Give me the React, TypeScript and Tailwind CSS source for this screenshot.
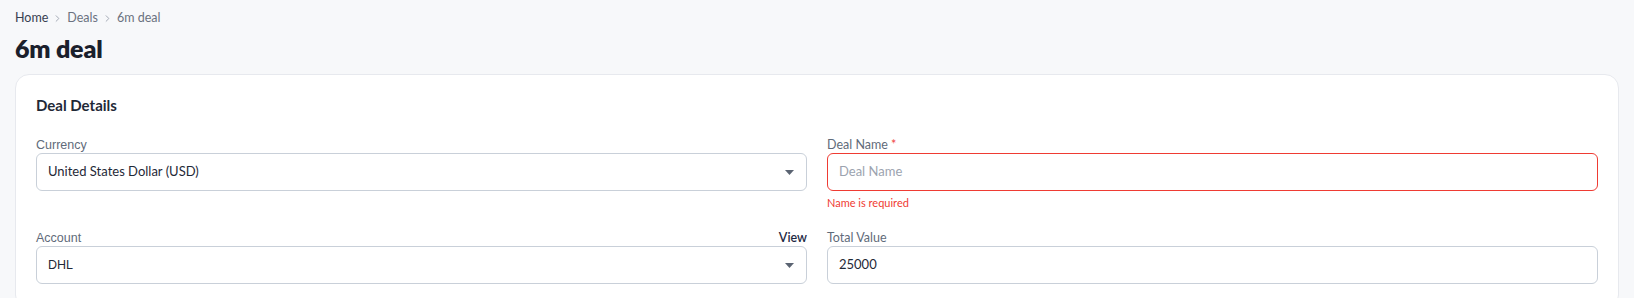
import React from 'react';
import { ChevronRight } from 'lucide-react';

const Caret = () => (
    <svg width="9" height="5" viewBox="0 0 9 5" className="shrink-0">
        <path d="M0 0 L9 0 L4.5 5 Z" fill="#5b6472" />
    </svg>
);

const Field = ({ label, children, aside, labelClass = '' }: { label: React.ReactNode; children: React.ReactNode; aside?: React.ReactNode; labelClass?: string }) => (
    <div className="flex flex-col">
        <div className="flex items-end justify-between h-4">
            <span className={`text-[12.5px] leading-4 text-[#5f6b7a] ${labelClass}`}>{label}</span>
            {aside}
        </div>
        {children}
    </div>
);

const App = () => {
    return (
        <div className="min-h-[298px] w-full bg-[#f7f8fa] px-[15px] pt-[10px] font-['Lato',sans-serif] text-[#1f2937]">
            {/* Breadcrumb */}
            <nav className="flex items-center gap-[4px] text-[12.5px] leading-4">
                <span className="text-[#374151]">Home</span>
                <ChevronRight size={11} strokeWidth={2} className="text-[#9ca3af]" />
                <span className="text-[#6b7280]">Deals</span>
                <ChevronRight size={11} strokeWidth={2} className="text-[#9ca3af]" />
                <span className="text-[#6b7280]">6m deal</span>
            </nav>

            <h1 className="mt-[6px] text-[25px] leading-[32px] font-extrabold text-[#1a202c] tracking-[-0.2px]">6m deal</h1>

            {/* Card */}
            <div className="mt-[10px] rounded-[14px] border border-[#e7e9ee] bg-white px-5 pt-[20px] pb-6">
                <h2 className="text-[15px] leading-5 font-bold text-[#1f2937]">Deal Details</h2>

                <div className="mt-[22px] grid grid-cols-2 gap-x-5 gap-y-5 items-start">
                    <Field label="Currency" labelClass="font-['Liberation_Sans',sans-serif]">
                        <div className="flex h-[38px] items-center justify-between rounded-[6px] border border-[#c9d0d9] pl-[11px] pr-[12px] text-[13px]">
                            <span className="text-[#1f2937]">United States Dollar (USD)</span>
                            <Caret />
                        </div>
                    </Field>

                    <Field label={<>Deal Name <span className="text-[#ef4444]">*</span></>}>
                        <div className="flex h-[38px] items-center rounded-[6px] border border-[#ef3b33] pl-[11px] text-[13px]">
                            <span className="text-[#9ca3af]">Deal Name</span>
                        </div>
                        <span className="mt-[5px] text-[11px] leading-[14px] text-[#ef3b33]">Name is required</span>
                    </Field>

                    <Field
                        label="Account"
                        labelClass="font-['Liberation_Sans',sans-serif]"
                        aside={<span className="text-[12.5px] leading-4 font-semibold text-[#1e2a44]">View</span>}
                    >
                        <div className="flex h-[38px] items-center justify-between rounded-[6px] border border-[#c9d0d9] pl-[11px] pr-[12px] text-[13px]">
                            <span className="font-['Liberation_Sans',sans-serif] text-[12.5px] text-[#1f2937]">DHL</span>
                            <Caret />
                        </div>
                    </Field>

                    <Field label="Total Value">
                        <div className="flex h-[38px] items-center rounded-[6px] border border-[#c9d0d9] pl-[11px] text-[13px]">
                            <span className="text-[#1f2937]">25000</span>
                        </div>
                    </Field>
                </div>
            </div>
        </div>
    );
};

export default App;
